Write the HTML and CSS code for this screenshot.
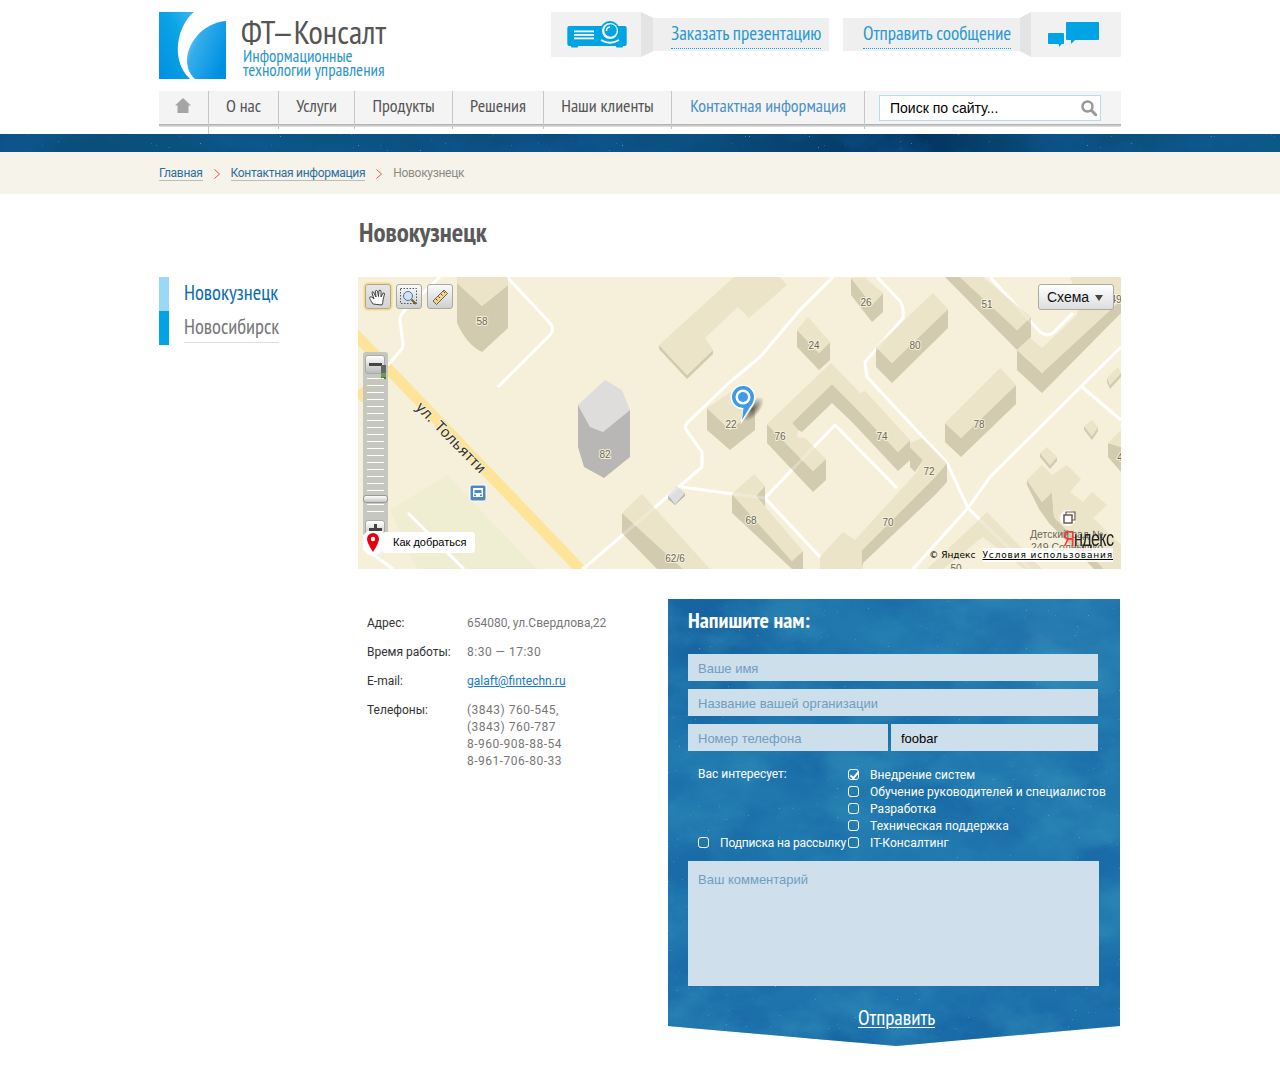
FILE: index.html
```html
<!DOCTYPE html>
<html lang="ru">
<head>
<meta charset="utf-8">
<title>Новокузнецк</title>
<link rel="stylesheet" href="styles.css">
</head>
<body>
<svg class="defs" width="0" height="0">
  <defs>
    <filter id="cloudDark" x="0" y="0" width="100%" height="100%" color-interpolation-filters="sRGB">
      <feTurbulence type="fractalNoise" baseFrequency=".011 .017" numOctaves="5" seed="11"/>
      <feColorMatrix values="0 0 0 0 .07  0 0 0 0 .36  0 0 0 0 .62  3.2 0 0 0 -1.350"/>
    </filter>
    <filter id="cloudLight" x="0" y="0" width="100%" height="100%" color-interpolation-filters="sRGB">
      <feTurbulence type="fractalNoise" baseFrequency=".014 .02" numOctaves="5" seed="23"/>
      <feColorMatrix values="0 0 0 0 .20  0 0 0 0 .56  0 0 0 0 .73  0 3 0 0 -1.350"/>
    </filter>
    <filter id="stars" x="0" y="0" width="100%" height="100%" color-interpolation-filters="sRGB">
      <feTurbulence type="fractalNoise" baseFrequency=".55" numOctaves="1" seed="5"/>
      <feColorMatrix values="0 0 0 0 .72  0 0 0 0 .88  0 0 0 0 .95  14 0 0 0 -10.500"/>
    </filter>
  </defs>
</svg>
<header class="wrap header">
  <a class="logo" href="#">
    <svg class="logo-mark" width="67" height="67" viewBox="0 0 67 67">
      <defs>
        <linearGradient id="lgL" x1="1" y1="0" x2="0" y2="1"><stop offset="0" stop-color="#3fb8ee"/><stop offset=".4" stop-color="#0aa3e6"/><stop offset="1" stop-color="#0091e2"/></linearGradient>
        <linearGradient id="lgR" x1="0" y1="0" x2="1" y2=".6"><stop offset="0" stop-color="#a8def6"/><stop offset=".35" stop-color="#35aeea"/><stop offset="1" stop-color="#0090e2"/></linearGradient>
      </defs>
      <path d="M0 0H35C18 14 11 48 31 67H0Z" fill="url(#lgL)"/>
      <path d="M67 9C43 11 28 32 28 48C28 56 31 63 36 67H67Z" fill="url(#lgR)"/>
    </svg>
    <span class="logo-text">
      <span class="logo-title">ФТ—Консалт</span>
      <span class="logo-sub">Информационные<br>технологии управления</span>
    </span>
  </a>
  <div class="cta-group">
    <div class="cta-icon">
      <svg width="60" height="27" viewBox="0 0 60 27">
        <rect x="4" y="24" width="7" height="2.500" rx="1" fill="#00a3e4"/><rect x="49" y="24" width="7" height="2.500" rx="1" fill="#00a3e4"/>
        <rect x="0.300" y="5" width="59.400" height="20" rx="2" fill="#00a3e4"/>
        <rect x="7" y="9.500" width="20" height="1.800" fill="#fff"/><rect x="7" y="13" width="20" height="1.800" fill="#fff"/><rect x="7" y="16.500" width="20" height="1.800" fill="#fff"/>
        <circle cx="43" cy="10" r="10" fill="#00a3e4"/><circle cx="43" cy="10" r="8" fill="#fff"/><circle cx="43.500" cy="9.500" r="6.200" fill="#00a3e4"/>
        <path d="M39.500 10A4 4 0 0 1 43 6" stroke="#fff" stroke-width="1.500" fill="none"/>
        <path d="M34 19Q43 24.500 52 19" stroke="#fff" stroke-width="1.800" fill="none"/>
      </svg>
    </div>
    <i class="fold fold-l"></i>
    <div class="ribbon ribbon-a"><a href="#">Заказать презентацию</a></div>
    <div class="ribbon ribbon-b"><a href="#">Отправить сообщение</a></div>
    <i class="fold fold-r"></i>
    <div class="cta-icon cta-chat">
      <svg width="52" height="26" viewBox="0 0 52 26">
        <path d="M18 1Q18 0 19 0H50Q51 0 51 1V17Q51 18 50 18H27L23 22V18H19Q18 18 18 17Z" fill="#00a3e4"/>
        <path d="M1 11H15Q16 11 16 12V21Q16 22 15 22H13.500L11.500 25L10.500 22H1Q0 22 0 21V12Q0 11 1 11Z" fill="#00a3e4"/>
      </svg>
    </div>
  </div>
</header>

<nav class="wrap nav">
  <a class="nav-home" href="#">
    <svg width="16" height="15" viewBox="0 0 16 15"><path d="M8 0L16 7.500H13.500V15H2.500V7.500H0Z" fill="#a5a5a5"/></svg>
  </a>
  <a class="nav-item w1" href="#">О нас</a>
  <a class="nav-item w2" href="#">Услуги</a>
  <a class="nav-item w3" href="#">Продукты</a>
  <a class="nav-item w4" href="#">Решения</a>
  <a class="nav-item w5" href="#">Наши клиенты</a>
  <a class="nav-item w6 nav-active" href="#">Контактная информация</a>
  <i class="nav-end"></i>
  <div class="search">
    <span class="search-text">Поиск по сайту...</span>
    <svg width="16" height="16" viewBox="0 0 16 16"><circle cx="6.500" cy="6.500" r="5" fill="none" stroke="#999" stroke-width="2.500"/><path d="M10.500 10.500L15 15" stroke="#999" stroke-width="3" stroke-linecap="round"/></svg>
  </div>
</nav>

<div class="band">
  <svg class="tex" width="1280" height="18"><rect width="1280" height="18" filter="url(#cloudDark)" opacity=".5"/><rect width="1280" height="18" filter="url(#stars)" opacity=".5"/></svg>
</div>

<div class="crumbs">
  <div class="wrap crumbs-row">
    <a href="#">Главная</a><svg class="chev" width="6" height="10" viewBox="0 0 6 10"><path d="M.5 .5L5.500 5L.5 9.500" fill="none" stroke="#e2553a"/></svg>
    <a href="#">Контактная информация</a><svg class="chev" width="6" height="10" viewBox="0 0 6 10"><path d="M.5 .5L5.500 5L.5 9.500" fill="none" stroke="#e2553a"/></svg>
    <span>Новокузнецк</span>
  </div>
</div>

<main class="wrap main">
  <aside class="side">
    <a class="side-item side-current" href="#"><span>Новокузнецк</span></a>
    <a class="side-item" href="#"><span class="under">Новосибирск</span></a>
  </aside>
  <div class="content">
    <h1 class="title">Новокузнецк</h1>
    <div class="map">
      <svg class="map-svg" width="762" height="292" viewBox="0 0 762 292">
        <defs>
          <g id="roads">
            <path d="M148 0L191 46Q196 52 191 58L139 110"/>
            <path d="M81 0L46 33Q41 38 41 43L44 67Q44 71 42 73L29 88"/>
            <path d="M474 0L441 33L401 80L371 105L328 146Q325 150 328 154L343 175V190L224 292"/>
            <path d="M323 210L374 217L406 221L461 280"/>
            <path d="M406 221L476 148L538 211"/>
            <path d="M518 0L541 24Q545 30 544 41L506 85L508 100L588 186L609 231"/>
            <path d="M609 231L631 200L762 70"/>
            <path d="M609 231L554 292"/>
            <path d="M609 231L671 292"/>
            <path d="M723 110L762 143"/>
            <path d="M631 0L681 55Q688 60 694 56L714 36"/>
            <path d="M49 236L105 292"/>
            <path d="M4 270L34 292"/>
          </g>
        </defs>
        <rect x="-1" width="763" height="292" fill="#f6f0da"/>
        <polygon points="31,233 88,198 178,292 58,292" fill="#efedd2"/>
        <g class="road-y"><path d="M-4 57L221 292"/><path d="M-1 121L24 100"/></g>
        <use href="#roads" class="road"/>
        <polygon class="g-top" points="309,218 318,209 326,216 316,227" />
        <polygon points="309,218 316,227 326,216 326,219 316,228 309,222" fill="#b9b7b6"/>

        <path class="wall" d="M98 6L123 29L149 8V51L123 75Q108 68 98 46Z"/>
        <g class="s">
          <polygon points="300,68 328,98 354,73 354,77 328,102 300,72"/>
          <polygon points="348,131 371,153 396,133 396,153 371,173 348,153"/>
          <polygon points="438,53 460,76 471,65 471,83 460,93 438,70"/>
          <polygon points="492,1 513,28 524,16 524,35 513,45 492,18"/>
          <polygon points="517,70 533,86 589,32 589,51 533,106 517,90"/>
          <polygon points="586,146 602,161 657,108 657,127 602,180 586,165"/>
          <polygon points="586,0 601,0 658,53 672,40 672,60 658,73"/>
          <polygon points="658,73 683,96 762,23 762,36 683,116 658,93"/>
          <polygon points="408,147 454,194 454,215 408,166"/>
          <polygon points="454,194 467,182 467,203 454,215"/>
          <polygon points="433,146 473,107 473,126 443,155 439,153"/>
          <polygon points="473,107 494,128 494,146 473,126"/>
          <polygon points="494,128 539,175 539,194 494,146"/>
          <polygon points="539,175 551,163 551,183 539,194"/>
          <polygon points="551,170 564,183 556,195 551,190"/>
          <polygon points="576,200 588,186 588,205 576,218"/>
          <polygon points="503,273 576,200 576,218 504,286 503,292"/>
          <polygon points="373,217 433,284 433,292 373,236"/>
          <polygon points="433,284 444,274 444,292 433,292"/>
          <polygon points="397,219 406,209 406,230"/>
          <polygon points="263,236 324,292 298,292 263,256"/>
          <polygon points="668,203 683,225 693,215 695,240 745,292 735,292 690,246 680,232 668,208"/>
          <polygon points="681,176 691,188 698,180 698,184 691,192 681,180"/>
          <polygon points="725,149 733,159 739,150 739,154 733,163 725,153"/>
          <polygon points="748,101 751,108 762,96 762,100 751,112 748,105"/>
          <polygon points="749,166 762,170 762,195 749,180"/>
        </g>
        <g class="t">
          <polygon points="98,0 149,0 149,8 123,29 98,6"/>
          <polygon points="300,68 375,0 421,0 428,8 390,41 379,30 346,61 354,73 328,98"/>
          <polygon points="348,131 372,115 396,133 371,153"/>
          <polygon points="438,53 449,40 471,65 460,76"/>
          <polygon points="492,1 505,0 524,16 513,28"/>
          <polygon points="517,70 574,16 589,32 533,86"/>
          <polygon points="586,146 641,91 657,108 602,161"/>
          <polygon points="601,0 624,0 672,40 658,53"/>
          <polygon points="658,73 671,61 683,71 718,38 721,26 711,0 762,0 762,23 683,96"/>
          <polygon points="408,147 472,86 501,116 506,114 551,163 539,175 494,128 473,107 433,146 439,153 438,160 446,161 467,182 454,194"/>
          <polygon points="563,161 588,186 576,200 503,273 503,292 461,292 461,280 484,255 496,263 558,195 564,183 551,170 551,166"/>
          <polygon points="373,217 395,197 406,209 397,219 444,274 433,284"/>
          <polygon points="263,236 283,217 351,292 324,292"/>
          <polygon points="628,235 683,292 665,292 624,260 584,292 568,292"/>
          <polygon points="668,203 683,188 693,198 708,188 722,202 711,215 724,225 733,215 748,228 734,241 762,268 762,292 745,292 695,240 693,215 683,225"/>
          <polygon points="681,176 688,170 698,180 691,188"/>
          <polygon points="725,149 733,143 739,150 733,159"/>
          <polygon points="748,101 759,90 762,96 751,108"/>
          <polygon points="749,166 762,153 762,170"/>
        </g>
        <use href="#roads" class="road road-over"/>
        <polygon points="246,103 263,113 271,133 244,155 231,150 219,128" fill="#dfdddc"/>
        <polygon points="219,128 231,150 244,155 271,133 271,180 245,201 225,190 219,170" fill="#b9b7b6"/>
        <g class="num">
          <text x="123" y="48">58</text><text x="246" y="181">82</text><text x="372" y="151">22</text>
          <text x="455" y="72">24</text><text x="507" y="29">26</text><text x="556" y="72">80</text><text x="628" y="31">51</text>
          <text x="620" y="151">78</text><text x="421" y="163">76</text><text x="523" y="163">74</text><text x="570" y="198">72</text>
          <text x="529" y="249">70</text><text x="392" y="247">68</text><text x="316" y="285">62/6</text><text x="597" y="295">50</text>
          <text x="757" y="26">49</text><text x="761" y="184">4</text>
        </g>
        <text class="street" transform="translate(56,131) rotate(45.500)">ул. Тольятти</text>
        <rect x="111" y="208" width="16" height="16" rx="2" fill="#4a88c7" stroke="#fff"/>
        <path d="M114 211H124V220H114Z" fill="#fff"/><rect x="115.500" y="213" width="7" height="3" fill="#4a88c7"/><rect x="115" y="217.500" width="2" height="1.500" fill="#4a88c7"/><rect x="121" y="217.500" width="2" height="1.500" fill="#4a88c7"/>
        <circle cx="709" cy="241" r="8" fill="#fff"/><rect x="705" y="238" width="8" height="8" fill="none" stroke="#6b5c50" stroke-width="1.500"/><path d="M707 238V235H716V243H713" fill="none" stroke="#6b5c50" stroke-width="1.200"/>
        <text class="kinder" x="671" y="261">Детский сад №</text><text class="kinder" x="672" y="274">249 Солнышко</text>
        <defs><radialGradient id="pinSh"><stop offset="0" stop-color="#000" stop-opacity=".6"/><stop offset="1" stop-color="#000" stop-opacity="0"/></radialGradient></defs>
        <ellipse cx="394" cy="132" rx="7" ry="15" transform="rotate(40 394 132)" fill="url(#pinSh)"/>
        <path d="M384 107.500A12.500 12.500 0 0 1 396.500 120Q396.500 126 392.500 131L381.500 147.500L384 132.500A12.500 12.500 0 0 1 371.500 120A12.500 12.500 0 0 1 384 107.500Z" fill="#fff"/>
        <path d="M384 109A11 11 0 0 1 395 120Q395 125 391 130L383 143L384.500 131A11 11 0 0 1 373 120A11 11 0 0 1 384 109Z" fill="#3f9be8"/>
        <circle cx="384" cy="120" r="7.500" fill="#fff"/><circle cx="384" cy="120" r="5" fill="#3f9be8"/>
      </svg>

      <div class="tools">
        <span class="tool tool-on">
          <svg width="20" height="20" viewBox="0 0 20 20"><path d="M5 17C3 14 1 11 2 10S5 11 6 12L4 6Q4 4 5.500 5L8 10L7.500 4Q8 2.500 9.500 4L10.500 9.500L11 3.500Q12.500 2.500 13 4L13 10L15 6Q16.500 5.500 16.500 7L15 13Q15 16 14 18Z" fill="#fff" stroke="#333" stroke-width=".9"/></svg>
        </span>
        <span class="tool">
          <svg width="20" height="20" viewBox="0 0 20 20"><rect x="1.500" y="1.500" width="16" height="15" fill="none" stroke="#555" stroke-dasharray="1.500 1.500"/><circle cx="9" cy="9" r="4.500" fill="#cfe2f7" stroke="#4e73a8"/><path d="M12.500 12.500L17 17" stroke="#7b5a2d" stroke-width="2"/></svg>
        </span>
        <span class="tool">
          <svg width="20" height="20" viewBox="0 0 20 20"><path d="M3 14L14 3L17.500 6.500L6.500 17.500Z" fill="#f6d585" stroke="#444" stroke-width=".8"/><path d="M6 12L7.500 13.500M8.500 9.500L10 11M11 7L12.500 8.500M13.500 4.500L15 6" stroke="#444"/></svg>
        </span>
      </div>
      <div class="zoom">
        <span class="zoom-btn"><i class="z-minus"></i></span>
        <i class="zoom-mark"></i>
        <div class="zoom-ticks"></div>
        <span class="zoom-handle"></span>
        <span class="zoom-btn zoom-plus"><i class="z-minus"></i><i class="z-vert"></i></span>
      </div>
      <div class="route">
        <span class="route-pin"><svg width="12" height="19" viewBox="0 0 12 19"><path d="M6 0A6 6 0 0 1 12 6Q12 10 6 19Q0 10 0 6A6 6 0 0 1 6 0Z" fill="#e8000f"/><circle cx="6" cy="6" r="2.200" fill="#fff"/></svg></span>
        <span class="route-label">Как добраться</span>
      </div>
      <div class="scheme">Схема <i class="tri"></i></div>
      <div class="ya"><b>Я</b>ндекс</div>
      <div class="legal"><span class="legal-c">© Яндекс</span><a href="#">Условия использования</a></div>
    </div>

    <div class="lower">
      <dl class="info">
        <dt>Адрес:</dt><dd>654080, ул.Свердлова,22</dd>
        <dt>Время работы:</dt><dd class="digits">8:30 — 17:30</dd>
        <dt>E-mail:</dt><dd><a href="#">galaft@fintechn.ru</a></dd>
        <dt>Телефоны:</dt><dd class="digits">(3843) 760-545,<br>(3843) 760-787<br>8-960-908-88-54<br>8-961-706-80-33</dd>
      </dl>
      <form class="form">
        <svg class="tex" width="452" height="447">
          <rect width="452" height="447" filter="url(#cloudDark)" opacity=".4"/>
          <rect width="452" height="447" filter="url(#cloudLight)" opacity=".55"/>
          <rect width="452" height="447" filter="url(#stars)" opacity=".4"/>
        </svg>
        <h2 class="form-title">Напишите нам:</h2>
        <input class="field" placeholder="Ваше имя">
        <input class="field" placeholder="Название вашей организации">
        <div class="field-row">
          <input class="field f-phone" placeholder="Номер телефона">
          <input class="field f-extra" value="foobar">
        </div>
        <div class="checks">
          <div class="checks-left">
            <span class="interest">Вас интересует:</span>
            <label class="chk chk-sub"><input type="checkbox"><span>Подписка на рассылку</span></label>
          </div>
          <div class="checks-right">
            <label class="chk"><input type="checkbox" checked><span>Внедрение систем</span></label>
            <label class="chk"><input type="checkbox"><span>Обучение руководителей и специалистов</span></label>
            <label class="chk"><input type="checkbox"><span>Разработка</span></label>
            <label class="chk"><input type="checkbox"><span>Техническая поддержка</span></label>
            <label class="chk"><input type="checkbox"><span>IT-Консалтинг</span></label>
          </div>
        </div>
        <textarea class="comment" placeholder="Ваш комментарий"></textarea>
        <a class="send" href="#">Отправить</a>
      </form>
    </div>
  </div>
</main>
</body>
</html>
```
FILE: styles.css
```css
* { box-sizing: border-box; }
html, body { margin: 0; padding: 0; }
body { background: #fff; font-family: Roboto, "Noto Sans", sans-serif; font-size: 13px; color: #555; height: 1070px; overflow: hidden; }
a { color: inherit; text-decoration: none; }
.defs { position: absolute; }
.wrap { width: 962px; margin: 0 auto; }
.logo-title, .logo-sub, .ribbon a, .nav-item, .title, .side-item, .form-title, .send {
  font-family: "PT Sans Narrow", "Roboto Condensed", "Liberation Sans Narrow", "Noto Sans", sans-serif;
}

.header { display: flex; justify-content: space-between; padding-top: 12px; height: 91px; }
.logo { display: flex; gap: 15px; height: 67px; }
.logo-text { display: flex; flex-direction: column; }
.logo-title { font-size: 33px; line-height: 34px; color: #555; white-space: nowrap; margin-top: 3px; }
.logo-sub { font-size: 17px; line-height: 14px; color: #2b95c8; margin-left: 2px; }
.cta-group { display: flex; align-items: center; height: 45px; }
.cta-icon { width: 90px; height: 45px; background: #f1f1f1; display: flex; align-items: center; padding-left: 16px; }
.cta-chat { padding-left: 17px; }
.fold { width: 12px; height: 45px; background: #e4e4e4; }
.fold-l { clip-path: polygon(0 0, 100% 13%, 100% 87%, 0 100%); }
.fold-r { width: 11px; clip-path: polygon(0 13%, 100% 0, 100% 100%, 0 87%); }
.ribbon { height: 33px; background: #efefef; display: flex; align-items: flex-start; }
.ribbon-a { width: 176px; padding-left: 18px; margin-right: 14px; }
.ribbon-b { width: 177px; padding-left: 20px; }
.ribbon a { font-size: 19px; line-height: 30px; color: #2899d4; border-bottom: 1px dotted #00a3e4; white-space: nowrap; }

.nav { display: flex; height: 36px; position: relative; align-items: stretch; background-image: linear-gradient(#f4f4f4 33px, #a9a9a9 33px, #e8e8e8 36px); }
.nav-home { width: 49px; display: flex; align-items: flex-start; justify-content: center; padding-top: 7px; padding-right: 2px; }
.nav-item { font-size: 18px; line-height: 29px; color: #555; text-align: center; border-left: 1px solid #c6c6c6; height: 38px; white-space: nowrap; }
.w1 { width: 70px; height: 43px; } .w2 { width: 76px; } .w3 { width: 98px; } .w4 { width: 91px; } .w5 { width: 128px; } .w6 { width: 193px; }
.nav-active { color: #4a90c4; }
.nav-end { width: 1px; height: 38px; background: #c6c6c6; }
.search { margin: 4px 20px 0 auto; width: 222px; height: 26px; background: #fff; border: 1px solid #b8dbec; display: flex; align-items: center; justify-content: space-between; padding: 0 3px 0 10px; font: 14px "Liberation Sans", sans-serif; color: #000; }
.search-text { line-height: 24px; }

.band { position: relative; height: 18px; margin-top: 7px; overflow: hidden; background: linear-gradient(90deg, #0a4d7a 0%, #0b5480 25%, #0a4a78 42%, #0b5180 52%, #03345f 72%, #0a4c79 82%, #0d5985 100%); }
.tex { position: absolute; left: 0; top: 0; }
.crumbs { height: 42px; background: #f6f3eb; }
.crumbs-row { display: flex; align-items: center; height: 42px; font-size: 12px; letter-spacing: -.3px; color: #8a8a82; }
.crumbs-row a { color: #2a6f9d; border-bottom: 1px solid #bdbdb6; line-height: 14px; }
.chev { margin: 1px 11px 0 11px; }

.main { display: grid; grid-template-columns: 200px 762px; }
.side { padding-top: 83px; display: flex; flex-direction: column; }
.side-item { display: block; height: 34px; font-size: 20.500px; line-height: 31px; padding-left: 15px; border-left: 10px solid #00a3e4; color: #777; white-space: nowrap; }
.side-current { border-left-color: #9ad9f6; color: #0a6bb0; }
.under { border-bottom: 1px solid #ddd; display: inline-block; line-height: 31px; }
.title { margin: 0; font-size: 27px; line-height: 30px; height: 83px; padding-top: 23px; color: #5a5a5a; font-weight: 700; }
.map { position: relative; width: 763px; height: 292px; margin-left: -1px; overflow: hidden; background: #f6f0da; }
.map-svg { display: block; margin-left: 1px; overflow: visible; }
.t polygon { fill: #ebe4c8; }
.s polygon, .wall { fill: #d3cbb0; }
.g-top { fill: #dedede; }
.road { fill: none; stroke: #fff; stroke-width: 3; stroke-linejoin: round; }
.road-over { opacity: .25; }
.road-y path { fill: none; stroke: #fde499; stroke-width: 11; }
.num text { font: 10px "Liberation Sans", sans-serif; fill: #6a6758; text-anchor: middle; stroke: #f6f0da; stroke-width: 2; paint-order: stroke; }
.street { font: 15px "Liberation Sans", sans-serif; fill: #333; stroke: #f6f0da; stroke-width: 2; paint-order: stroke; letter-spacing: .5px; }
.kinder { font: 10.500px "Liberation Sans", sans-serif; fill: #6a6758; }

.tools { position: absolute; left: 7px; top: 7px; display: flex; gap: 5px; }
.tool { width: 26px; height: 25px; border: 1px solid #a8a8a8; border-radius: 3px; background: linear-gradient(#fafafa, #cfcfcf); display: flex; align-items: center; justify-content: center; }
.tool-on { box-shadow: 0 0 0 1.500px #fbd97c; background: linear-gradient(#e6e6e6, #d4d4d4); }
.zoom { position: absolute; left: 5px; top: 75px; width: 25px; height: 192px; background: rgba(193,195,190,.92); border-radius: 3px; }
.zoom-btn { position: absolute; left: 2px; top: 3px; width: 20px; height: 19px; border-radius: 3px; border: 1px solid #aaa; background: linear-gradient(#fff, #bbb); }
.zoom-plus { top: 168px; }
.z-minus { position: absolute; left: 3px; top: 7px; width: 13px; height: 3px; background: #444; }
.z-vert { position: absolute; left: 8px; top: 2.500px; width: 3px; height: 12px; background: #444; }
.zoom-mark { position: absolute; left: 18px; top: 13px; width: 5px; height: 14px; background: linear-gradient(#666 60%, #6a9e4a 60%, #6a9e4a 85%, #666 85%); }
.zoom-ticks { position: absolute; left: 4px; right: 4px; top: 26px; height: 138px; background: repeating-linear-gradient(#fff 0 1px, transparent 1px 7px); }
.zoom-handle { position: absolute; left: 0; top: 143px; width: 25px; height: 8px; border-radius: 3px; border: 1px solid #999; background: linear-gradient(#fff, #c4c4c4); }
.route { position: absolute; left: 5px; top: 255px; display: flex; align-items: center; height: 21px; }
.route-pin { width: 20px; height: 24px; background: #fff; clip-path: polygon(25% 0, 100% 0, 100% 80%, 75% 100%, 25% 100%, 0 80%, 0 20%); display: flex; align-items: center; justify-content: center; position: relative; z-index: 1; }
.route-label { background: #fff; border-radius: 4px; height: 21px; padding: 0 9px 0 11px; font: 11px/21px "Liberation Sans", sans-serif; color: #000; white-space: nowrap; margin-left: -1px; }
.scheme { position: absolute; left: 680px; top: 7px; width: 76px; height: 26px; border: 1px solid #aaa; border-radius: 3px; background: linear-gradient(#fff, #ddd); font: 14px/24px "Liberation Sans", sans-serif; color: #111; padding-left: 8px; }
.tri { display: inline-block; border: 4px solid transparent; border-top: 6px solid #444; border-bottom: 0; margin-left: 2px; vertical-align: 1px; }
.ya { position: absolute; left: 705px; top: 250px; font: 22px/24px "Liberation Sans Narrow", "Liberation Sans", sans-serif; color: #222; letter-spacing: -1px; transform: scaleX(.74); transform-origin: left; white-space: nowrap; }
.ya b { color: #f33; font-weight: 400; }
.legal { position: absolute; right: 8px; top: 271px; display: flex; gap: 7px; font: 9px/14px "DejaVu Sans", sans-serif; color: #000; white-space: nowrap; }
.legal a { background: rgba(255,255,255,.85); text-decoration: underline; letter-spacing: .85px; }

.lower { display: flex; margin-top: 30px; }
.info { margin: 0; width: 309px; display: grid; grid-template-columns: 100px 1fr; row-gap: 12px; padding: 16px 0 0 8px; align-content: start; line-height: 17px; font-size: 12px; }
.info dt { color: #333; }
.info dd { margin: 0; color: #777; white-space: nowrap; }
.info .digits { letter-spacing: .5px; }
.info dd a { color: #1b78c2; text-decoration: underline; }

.form { position: relative; width: 452px; height: 447px; padding: 0 20px; color: #fff; clip-path: polygon(0 0, 100% 0, 100% 427px, 50.500% 100%, 0 427px); display: flex; flex-direction: column; background:
  radial-gradient(circle at 12% 6%, #17649f 0, transparent 110px),
  radial-gradient(circle at 85% 12%, #2f87b8 0, transparent 130px),
  linear-gradient(#2078ae, #1f77ae 80%, #1c6faa);
}
.form > *:not(.tex) { position: relative; z-index: 1; }
.form-title { margin: 0; font-size: 22px; line-height: 42px; height: 55px; font-weight: 700; color: #fff; }
.field { display: block; width: 410px; height: 27px; border: 0; border-radius: 0; background: #cddfeb; padding: 2px 10px 0; margin: 0 0 8px; font: 13px "Liberation Sans", sans-serif; color: #000; outline: 0; }
.field::placeholder, .comment::placeholder { color: #6f9dc3; opacity: 1; }
.field-row { display: flex; gap: 3px; }
.f-phone { width: 200px; }
.f-extra { width: 207px; }
.checks { display: flex; margin-top: 7px; padding-left: 10px; height: 85px; }
.checks-left { width: 150px; flex: none; display: flex; flex-direction: column; justify-content: space-between; }
.checks-right { display: flex; flex-direction: column; flex: none; }
.interest { line-height: 17px; font-size: 12px; }
.chk { display: flex; align-items: center; height: 17px; font-size: 12px; letter-spacing: .05px; white-space: nowrap; }
.chk-sub { letter-spacing: -.15px; }
.chk input { appearance: none; -webkit-appearance: none; width: 11px; height: 11px; margin: 0 11px 0 0; border: 1px solid #fff; border-radius: 3px; background: transparent; position: relative; flex: none; }
.chk input:checked::after { content: ""; position: absolute; left: 3px; top: 0; width: 3px; height: 7px; border: solid #fff; border-width: 0 2px 2px 0; transform: rotate(40deg); }
.comment { display: block; width: 411px; height: 125px; margin-top: 10px; border: 0; border-radius: 0; resize: none; background: #cfe0ec; padding: 11px 10px; font: 13px "Liberation Sans", sans-serif; outline: 0; }
.send { align-self: center; margin-top: 18px; font-size: 21px; line-height: 27px; color: #fff; text-decoration: underline; text-decoration-thickness: 1px; text-underline-offset: 2px; margin-left: 5px; }
```
